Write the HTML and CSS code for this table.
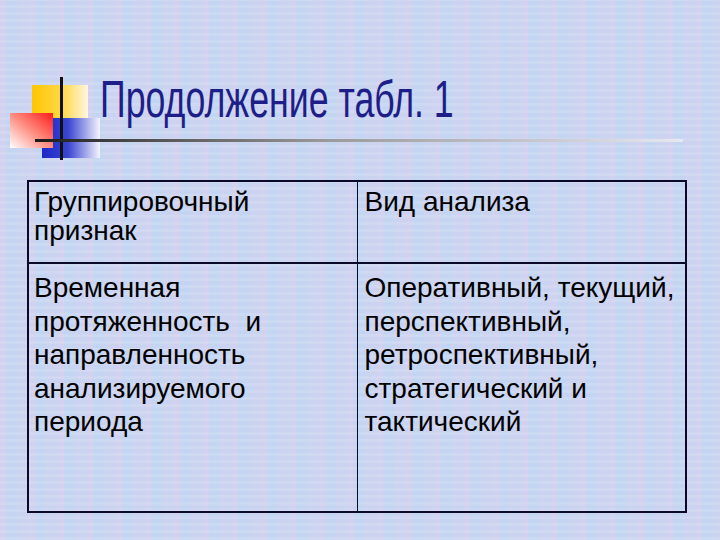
FILE: index.html
```html
<!DOCTYPE html>
<html lang="ru">
<head>
<meta charset="utf-8">
<title>Продолжение табл. 1</title>
<link rel="stylesheet" href="styles.css">
</head>
<body>
<div class="slide">
  <header class="head">
    <svg class="logo" width="110" height="100" viewBox="0 0 110 100" aria-hidden="true">
      <defs>
        <linearGradient id="gy" x1="0" y1="0" x2="1" y2="0">
          <stop offset="0" stop-color="#ffc600"/>
          <stop offset="0.55" stop-color="#ffd84a"/>
          <stop offset="1" stop-color="#fff6e0"/>
        </linearGradient>
        <linearGradient id="gr" x1="1" y1="0" x2="0" y2="1">
          <stop offset="0" stop-color="#ff1a1a"/>
          <stop offset="0.5" stop-color="#ff8c80"/>
          <stop offset="1" stop-color="#ffffff"/>
        </linearGradient>
        <linearGradient id="gb" x1="0" y1="0" x2="1" y2="0">
          <stop offset="0" stop-color="#1c28c8"/>
          <stop offset="0.45" stop-color="#3a46d0"/>
          <stop offset="1" stop-color="#f4f4ff"/>
        </linearGradient>
      </defs>
      <rect x="32" y="25" width="56" height="48" fill="url(#gy)"/>
      <rect x="42" y="58" width="58" height="40" fill="url(#gb)"/>
      <rect x="10" y="53" width="43" height="35" fill="url(#gr)"/>
      <rect x="60" y="17" width="3" height="83" fill="#101010"/>
    </svg>
    <h1 class="title">Продолжение табл. 1</h1>
    <div class="rule"></div>
  </header>
  <table class="grid">
    <tr class="r1">
      <td class="c1">Группировочный признак</td>
      <td class="c2">Вид анализа</td>
    </tr>
    <tr class="r2">
      <td class="c1">Временная протяженность&nbsp; и направленность анализируемого периода</td>
      <td class="c2">Оперативный, текущий, перспективный, ретроспективный, стратегический и тактический</td>
    </tr>
  </table>
</div>
</body>
</html>
```
FILE: styles.css
```css
html, body {
  margin: 0;
  padding: 0;
}
body {
  width: 720px;
  height: 540px;
  overflow: hidden;
  background-color: #c9d6f1;
  background-image:
    repeating-linear-gradient(90deg, rgba(228,205,238,0.35) 0 6px, rgba(185,215,245,0.25) 6px 17px, rgba(212,208,240,0.3) 17px 29px),
    repeating-linear-gradient(0deg, rgba(255,255,255,0.12) 0 3px, rgba(180,200,235,0.12) 3px 7px);
  font-family: "Liberation Sans", Arial, sans-serif;
}
.slide {
  position: relative;
  width: 720px;
  height: 540px;
}
.head {
  position: relative;
  height: 180px;
}
.logo {
  position: absolute;
  left: 0;
  top: 60px;
}
.title {
  margin: 0;
  padding: 72px 0 0 100px;
  font-weight: normal;
  font-size: 51px;
  line-height: 56px;
  color: #1e1e88;
  white-space: nowrap;
  transform: scaleX(0.7);
  transform-origin: 100px 0;
}
.rule {
  position: absolute;
  left: 35px;
  top: 139px;
  width: 648px;
  height: 3px;
  background: linear-gradient(90deg, #1a1a1a 0%, #4a4a4a 15%, #9a9a9a 45%, #e6e8f0 100%);
}
.grid {
  margin-left: 27px;
  width: 660px;
  border-collapse: collapse;
  border: 2px solid #0a0a28;
  font-size: 28px;
  color: #000;
  table-layout: fixed;
}
.grid td {
  vertical-align: top;
  border: 1px solid #0a0a28;
  width: 50%;
}
.grid .c1 {
  padding: 5px 4px 0 5px;
}
.grid .c2 {
  padding: 5px 2px 0 7px;
}
.r1 td {
  height: 75px;
  line-height: 29px;
  border-bottom: 2px solid #0a0a28;
}
.r2 td {
  height: 240px;
  line-height: 33.5px;
}
.r2 .c1, .r2 .c2 {
  padding-top: 7px;
}
```
